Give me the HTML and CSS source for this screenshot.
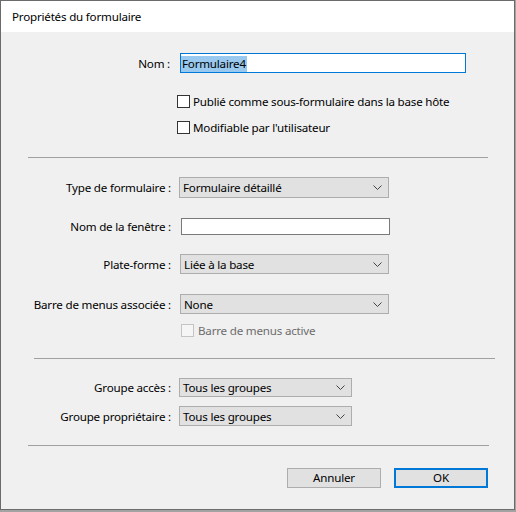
FILE: index.html
```html
<!DOCTYPE html>
<html lang="fr">
<head>
<meta charset="utf-8">
<title>Propriétés du formulaire</title>
<link rel="stylesheet" href="styles.css">
</head>
<body>
<div class="window">
  <div class="titlebar">Propriétés du formulaire</div>
  <div class="content">
    <div class="row row-nom">
      <span class="lbl">Nom :</span>
      <div class="field field-nom"><span class="selected">Formulaire4</span></div>
    </div>
    <div class="checks">
      <div class="check"><span class="box"></span><span class="check-text">Publié comme sous-formulaire dans la base hôte</span></div>
      <div class="check check-2"><span class="box"></span><span class="check-text">Modifiable par l'utilisateur</span></div>
    </div>
    <div class="sep sep-a"></div>
    <div class="row row-type">
      <span class="lbl">Type de formulaire :</span>
      <div class="select sel-wide"><span>Formulaire détaillé</span><svg class="chev" width="9" height="5" viewBox="0 0 9 5"><path d="M0.5 0.5 L4.5 4.5 L8.5 0.5" fill="none" stroke="#444" stroke-width="1"/></svg></div>
    </div>
    <div class="row row-fen">
      <span class="lbl">Nom de la fenêtre :</span>
      <div class="field field-fen"></div>
    </div>
    <div class="row row-plat">
      <span class="lbl">Plate-forme :</span>
      <div class="select sel-wide sel-shift"><span>Liée à la base</span><svg class="chev" width="9" height="5" viewBox="0 0 9 5"><path d="M0.5 0.5 L4.5 4.5 L8.5 0.5" fill="none" stroke="#444" stroke-width="1"/></svg></div>
    </div>
    <div class="row row-barre">
      <span class="lbl">Barre de menus associée :</span>
      <div class="select sel-wide sel-shift"><span>None</span><svg class="chev" width="9" height="5" viewBox="0 0 9 5"><path d="M0.5 0.5 L4.5 4.5 L8.5 0.5" fill="none" stroke="#444" stroke-width="1"/></svg></div>
    </div>
    <div class="check check-disabled"><span class="box"></span><span class="check-text">Barre de menus active</span></div>
    <div class="sep sep-b"></div>
    <div class="row row-acces">
      <span class="lbl">Groupe accès :</span>
      <div class="select sel-narrow"><span>Tous les groupes</span><svg class="chev" width="9" height="5" viewBox="0 0 9 5"><path d="M0.5 0.5 L4.5 4.5 L8.5 0.5" fill="none" stroke="#444" stroke-width="1"/></svg></div>
    </div>
    <div class="row row-proprio">
      <span class="lbl">Groupe propriétaire :</span>
      <div class="select sel-narrow"><span>Tous les groupes</span><svg class="chev" width="9" height="5" viewBox="0 0 9 5"><path d="M0.5 0.5 L4.5 4.5 L8.5 0.5" fill="none" stroke="#444" stroke-width="1"/></svg></div>
    </div>
    <div class="sep sep-c"></div>
    <div class="buttons">
      <div class="btn">Annuler</div>
      <div class="btn btn-ok">OK</div>
    </div>
  </div>
</div>
</body>
</html>
```

FILE: styles.css
```css
* { box-sizing: border-box; }

html, body {
  margin: 0;
  padding: 0;
}

body {
  background: #a3a3a3;
  width: 516px;
  height: 512px;
  font-family: "Noto Sans", "Open Sans", sans-serif;
  font-size: 11.6px;
  letter-spacing: -0.2px;
  color: #000;
}

.window {
  width: 515px;
  height: 510px;
  border: 1px solid #6b6b6b;
  background: #f0f0f0;
}

.titlebar {
  height: 31px;
  background: #fff;
  padding-left: 11px;
  line-height: 31px;
  color: #000;
}

.content {
  display: flex;
  flex-direction: column;
}

.row {
  display: flex;
  align-items: center;
}

.lbl {
  width: 170px;
  text-align: right;
  white-space: nowrap;
  flex: none;
}

.row-nom { margin-top: 21px; height: 20px; }
.row-nom .lbl { width: 169px; }

.field {
  background: #fff;
  border: 1px solid #7a7a7a;
  margin-left: 10px;
}

.field-nom {
  width: 286px;
  height: 20px;
  border-color: #0078d7;
  padding: 1px 0 0 0;
  display: flex;
  align-items: center;
}

.selected {
  background: #99c9ef;
  height: 16px;
  line-height: 16px;
  padding: 0 1px 0 1px;
}

.checks {
  display: flex;
  flex-direction: column;
  padding-left: 176px;
  margin-top: 22px;
}

.check {
  display: flex;
  align-items: center;
  height: 13px;
}

.check-2 { margin-top: 13px; }

.box {
  width: 13px;
  height: 13px;
  border: 1px solid #333;
  background: #fff;
  flex: none;
}

.check-text {
  margin-left: 3px;
  white-space: nowrap;
}

.sep {
  height: 1px;
  background: #a0a0a0;
}

.sep-a { margin: 23px 0 0 27px; width: 460px; }
.sep-b { margin: 21px 0 0 33px; width: 461px; }
.sep-c { margin: 19px 0 0 27px; width: 461px; }

.select {
  background: #e1e1e1;
  border: 1px solid #adadad;
  margin-left: 8px;
  display: flex;
  align-items: center;
  justify-content: space-between;
  padding: 0 6px 0 3px;
  white-space: nowrap;
}

.sel-wide { width: 210px; height: 21px; }
.sel-shift { margin-left: 9px; width: 209px; height: 20px; }
.sel-narrow { width: 173px; height: 20px; }

.chev { flex: none; }

.row-type { margin-top: 19px; height: 21px; }
.row-fen { margin-top: 20px; height: 17px; }
.field-fen { width: 209px; height: 17px; }
.row-plat { margin-top: 19px; height: 20px; }
.row-barre { margin-top: 20px; height: 20px; }

.check-disabled {
  margin-top: 10px;
  padding-left: 180px;
}

.check-disabled .box {
  border-color: #c4c4c4;
  background: #f5f5f5;
}

.check-disabled .check-text {
  color: #6d6d6d;
  margin-left: 4px;
}

.row-acces { margin-top: 19px; height: 19px; }
.row-acces .select { height: 19px; }
.row-proprio { margin-top: 9px; height: 20px; }

.buttons {
  display: flex;
  justify-content: flex-end;
  gap: 13px;
  margin-top: 22px;
  padding-right: 26px;
}

.btn {
  width: 94px;
  height: 20px;
  background: #e1e1e1;
  border: 1px solid #adadad;
  text-align: center;
  line-height: 18px;
}

.btn-ok {
  border: 2px solid #0078d7;
  line-height: 16px;
}
```
